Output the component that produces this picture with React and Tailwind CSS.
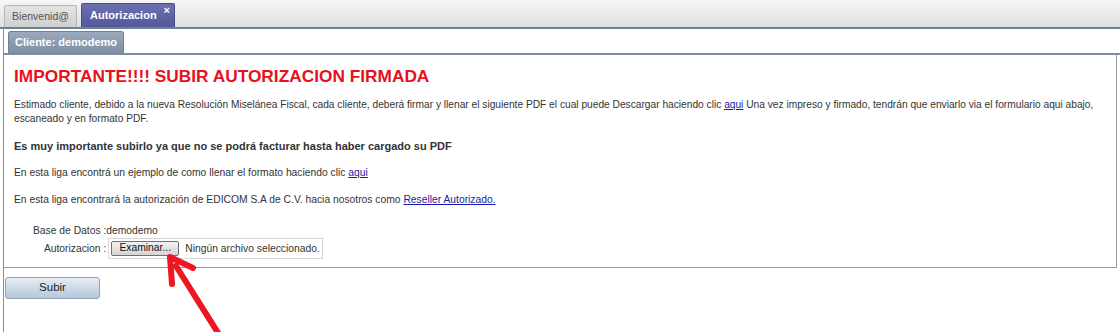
export default function App() {
  return (
    <div className="relative w-[1120px] h-[332px] bg-white overflow-hidden font-['Liberation_Sans',Arial,sans-serif]">
      {/* top tab bar */}
      <div className="h-[29px] flex items-end gap-[4px] pl-[4px] bg-gradient-to-b from-[#f7f7f7] to-[#dedede] border-b-2 border-[#6d8299]">
        <div className="h-[22px] w-[73px] flex items-center justify-center bg-gradient-to-b from-[#e4e4e4] to-[#cfcfcf] border border-b-0 border-[#b5b5b5] rounded-t-[2px] text-[10.5px] text-[#555]">
          Bienvenid@
        </div>
        <div className="relative h-[24px] w-[94px] pl-[8px] flex items-center bg-gradient-to-b from-[#6d70b0] to-[#54579a] border border-b-0 border-[#4a4d8a] rounded-t-[2px] text-[11px] font-bold text-white">
          Autorizacion
          <span className="absolute right-[4px] top-[1px] text-[11px] leading-none font-bold">×</span>
        </div>
      </div>

      <div className="ml-[3px] border-l border-[#8c8c8c] h-[303px]">
        {/* inner tab strip */}
        <div className="h-[26px] flex items-end pl-[4px] border-b-2 border-[#7c8da1]">
          <div className="h-[22px] w-[116px] flex items-center justify-center bg-gradient-to-b from-[#9aa9bb] to-[#7f90a5] border border-b-0 border-[#6f8095] rounded-t-[3px] text-[11px] font-bold text-white">
            Cliente: demodemo
          </div>
        </div>

        {/* content box */}
        <div className="mr-[3px] border-r border-b border-[#9a9a9a] pl-[10px] pr-[3px] pt-[10px] pb-[8px] text-[10.3px] text-[#333] leading-[14px]">
          <h1 className="text-[17.3px] leading-[22px] font-bold text-[#e8101a]">
            IMPORTANTE!!!! SUBIR AUTORIZACION FIRMADA
          </h1>
          <p className="mt-[11px] text-[10.2px]">
            Estimado cliente, debido a la nueva Resolución Miselánea Fiscal, cada cliente, deberá firmar y llenar el siguiente PDF el cual puede Descargar haciendo clic{' '}
            <a href="#" className="text-[#1a1aa6] underline">aqui</a> Una vez impreso y firmado, tendrán que enviarlo via el formulario aqui abajo, escaneado y en formato PDF.
          </p>
          <p className="mt-[13px] font-bold text-[11px]">
            Es muy importante subirlo ya que no se podrá facturar hasta haber cargado su PDF
          </p>
          <p className="mt-[13px]">
            En esta liga encontrá un ejemplo de como llenar el formato haciendo clic{' '}
            <a href="#" className="text-[#1a1aa6] underline">aqui</a>
          </p>
          <p className="mt-[13px]">
            En esta liga encontrará la autorización de EDICOM S.A de C.V. hacia nosotros como{' '}
            <a href="#" className="text-[#1a1aa6] underline">Reseller Autorizado.</a>
          </p>

          <div className="mt-[17px] ml-[19px] grid grid-cols-[auto_auto] justify-start items-center gap-y-[0px]">
            <div className="text-right">Base de Datos :</div>
            <div>demodemo</div>
            <div className="text-right">Autorizacion :</div>
            <div className="ml-[2px] h-[21px] border border-[#d6d6d6] flex items-center pl-[2px] pr-[2px] gap-[6px]">
              <button className="h-[15px] w-[68px] border border-[#707070] rounded-[2px] bg-gradient-to-b from-[#f2f2f2] to-[#d4d4d4] text-[10.3px] leading-none text-[#111]">
                Examinar...
              </button>
              <span className="text-[#333]">Ningún archivo seleccionado.</span>
            </div>
          </div>
        </div>

        <button className="mt-[9px] ml-[1px] w-[95px] h-[22px] rounded-[3px] border border-[#8fa2b8] bg-gradient-to-b from-[#e6edf5] to-[#b6c6d8] text-[11.5px] text-[#222]">
          Subir
        </button>
      </div>

      {/* red arrow annotation */}
      <svg className="absolute left-0 top-0 pointer-events-none" width="1120" height="332">
        <line x1="220" y1="336" x2="176" y2="266" stroke="#ee1620" strokeWidth="6" strokeLinecap="round" />
        <polyline points="172,284 170,257 193,268" fill="none" stroke="#ee1620" strokeWidth="6" strokeLinecap="round" strokeLinejoin="round" />
      </svg>
    </div>
  );
}
